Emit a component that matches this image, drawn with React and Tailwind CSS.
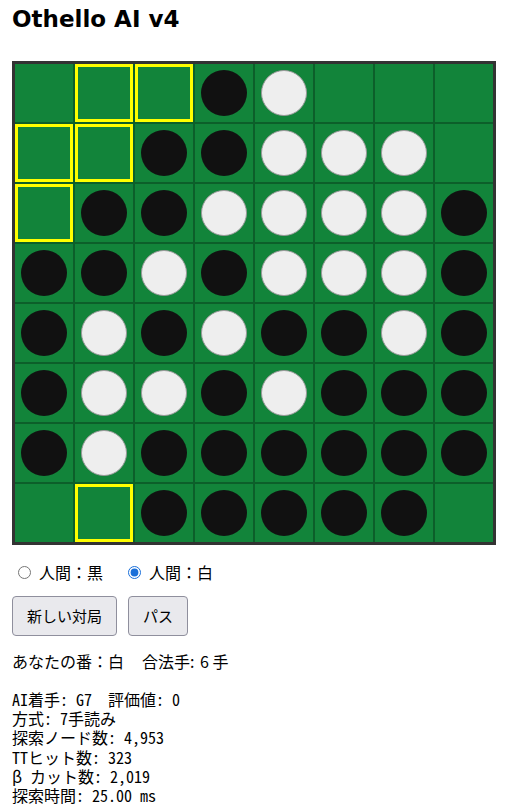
import React from "react";

// . empty, v legal move, b black, w white
const BOARD = [
  ".vvbw...",
  "vvbbwww.",
  "vbbwwwwb",
  "bbwbwwwb",
  "bwbwbbwb",
  "bwwbwbbb",
  "bwbbbbbb",
  ".vbbbbb.",
];

const STATS = [
  "AI着手: G7  評価値: 0",
  "方式: 7手読み",
  "探索ノード数: 4,953",
  "TTヒット数: 323",
  "β カット数: 2,019",
  "探索時間: 25.00 ms",
];

const Cell = ({ v }) => (
  <div
    className={
      "flex h-[58px] w-[58px] items-center justify-center bg-[#12843a] " +
      (v === "v" ? "border-[3px] border-[#ffff00]" : "")
    }
  >
    {v === "b" && <div className="h-[46px] w-[46px] rounded-full bg-[#111111]" />}
    {v === "w" && (
      <div className="h-[46px] w-[46px] rounded-full border border-[#999999] bg-[#eeeeee]" />
    )}
  </div>
);

export default function App() {
  return (
    <div
      className="min-h-screen bg-white px-3 text-black"
      style={{ fontFamily: '"Noto Sans CJK JP", "Noto Sans", sans-serif' }}
    >
      <h1
        className="mt-[2px] mb-6 text-[23px] font-bold leading-[35px]"
        style={{ fontFamily: '"DejaVu Sans", "Noto Sans CJK JP", sans-serif' }}
      >
        Othello AI v4
      </h1>

      <div className="inline-grid grid-cols-[repeat(8,58px)] gap-[2px] border-[3px] border-[#333333] bg-[#0c5f2a]">
        {BOARD.map((row, r) =>
          row.split("").map((v, c) => <Cell key={r * 8 + c} v={v} />)
        )}
      </div>

      <div className="mt-4 flex items-center text-base leading-[23px]">
        <label className="mr-[24px] flex items-center">
          <input type="radio" name="side" className="mr-[8px] ml-[6px] h-[13px] w-[13px]" readOnly />
          人間：黒
        </label>
        <label className="flex items-center">
          <input
            type="radio"
            name="side"
            defaultChecked
            className="mr-[8px] ml-[1px] h-[13px] w-[13px] accent-[#1a6fd9]"
          />
          人間：白
        </label>
      </div>

      <div className="mt-3 flex gap-[11px]">
        <button className="h-10 rounded-[4px] border border-[#8f8f9d] bg-[#e9e9ed] px-[14px] text-[15px]">
          新しい対局
        </button>
        <button className="h-10 rounded-[4px] border border-[#8f8f9d] bg-[#e9e9ed] px-[14px] text-[15px]">
          パス
        </button>
      </div>

      <p className="mt-[14px] text-base leading-[23px]">
        あなたの番：白<span className="inline-block w-[18px]" />合法手:{" "}
        <span className="ml-[2px]">6</span> 手
      </p>

      <pre
        className="mt-[17px] text-base leading-[1.2]"
        style={{ fontFamily: '"Noto Sans Mono CJK JP", "Noto Sans CJK JP", monospace' }}
      >
        {STATS.join("\n")}
      </pre>
    </div>
  );
}
